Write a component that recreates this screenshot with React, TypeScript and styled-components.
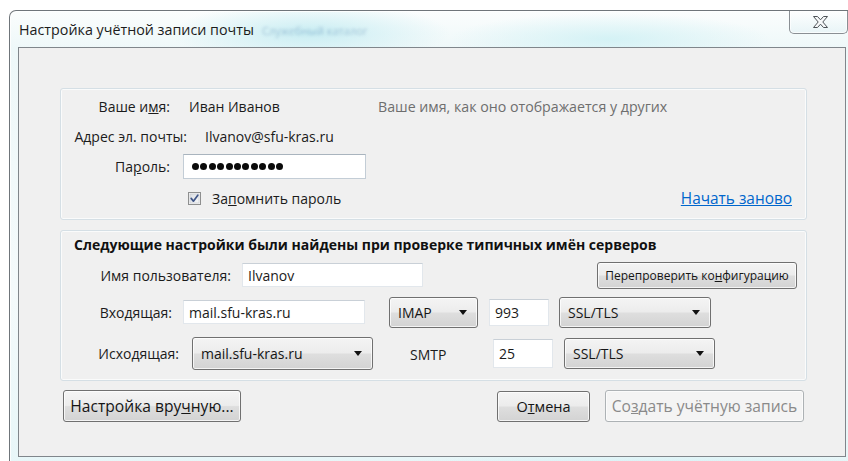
import React from "react";
import styled, { createGlobalStyle } from "styled-components";

const GlobalStyle = createGlobalStyle`
  html, body {
    margin: 0;
    padding: 0;
    background: #ffffff;
    overflow: hidden;
  }
  body {
    font-family: "Open Sans", "Noto Sans", "DejaVu Sans", sans-serif;
    color: #1b1b1b;
    -webkit-font-smoothing: antialiased;
  }
  #root {
    width: 848px;
    height: 461px;
    overflow: hidden;
  }
`;

const Screen = styled.div`
  width: 848px;
  height: 461px;
  box-sizing: border-box;
  overflow: hidden;
  background: #ffffff;
  padding: 10px 0 0 9px;
`;

const Window = styled.div`
  width: 849px;
  height: 470px;
  box-sizing: border-box;
  border: 1px solid #6f757a;
  border-bottom: none;
  border-radius: 7px 7px 0 0;
  padding: 0 11px 0 8px;
  display: flex;
  flex-direction: column;
  background:
    radial-gradient(ellipse 140px 30px at 300px 22px, rgba(196, 236, 242, 0.9), rgba(196, 236, 242, 0) 100%),
    radial-gradient(ellipse 160px 26px at 600px 28px, rgba(205, 240, 244, 0.8), rgba(205, 240, 244, 0) 100%),
    radial-gradient(ellipse 300px 20px at 640px 462px, rgba(200, 238, 244, 0.9), rgba(200, 238, 244, 0) 100%),
    linear-gradient(180deg, #fbfdfd 0%, #eef8f9 8%, #f4fafb 60%, #e6f6f8 100%);
  box-shadow: inset 1px 1px 0 rgba(255, 255, 255, 0.8);
`;

const TitleBar = styled.div`
  position: relative;
  height: 36px;
  flex-shrink: 0;
  display: flex;
  align-items: flex-start;
  margin-right: -2px;
`;

const Title = styled.span`
  position: relative;
  padding: 10px 0 0 1px;
  font-size: 14.3px;
  line-height: 18px;
  color: #1c1c1c;
  z-index: 1;
`;

/* text of the window lying behind the glass title bar */
const BehindGlass = styled.span`
  position: absolute;
  left: 244px;
  top: 12px;
  font-size: 11px;
  color: rgba(40, 90, 150, 0.3);
  filter: blur(1.4px);
  white-space: nowrap;
`;

const CloseButton = styled.div`
  margin-left: auto;
  width: 59px;
  height: 23px;
  box-sizing: border-box;
  border: 1px solid #8a8f94;
  border-top: none;
  border-radius: 0 0 5px 5px;
  background: linear-gradient(180deg, rgba(255, 255, 255, 0.7) 0%, rgba(240, 248, 250, 0.6) 50%, rgba(225, 240, 244, 0.6) 100%);
  box-shadow: inset 0 0 0 1px rgba(255, 255, 255, 0.7);
  display: flex;
  align-items: center;
  justify-content: center;
  padding-left: 4px;
`;

const Client = styled.div`
  height: 410px;
  flex-shrink: 0;
  box-sizing: border-box;
  border: 1px solid #80868b;
  background: #f0f0f0;
  padding: 40px 0 0 41px;
  display: flex;
  flex-direction: column;
`;

const GroupBox = styled.div<{ $h: number; $mt?: number }>`
  width: 747px;
  height: ${(p) => p.$h}px;
  margin-top: ${(p) => p.$mt ?? 0}px;
  box-sizing: border-box;
  border: 1px solid #d5dfe5;
  border-radius: 3px;
  box-shadow: inset 0 0 0 1px #fafbfb;
  padding: ${(p) => (p.$mt ? "0" : "2px")} 0 0 0;
  display: flex;
  flex-direction: column;
`;

const Row = styled.div<{ $h: number }>`
  height: ${(p) => p.$h}px;
  flex-shrink: 0;
  display: flex;
  align-items: center;
  font-size: 14px;
`;

const Label = styled.span<{ $w: number }>`
  width: ${(p) => p.$w}px;
  flex-shrink: 0;
  text-align: right;
  white-space: nowrap;
  color: #1b1b1b;
`;

const Value = styled.span<{ $ml: number; $w?: number }>`
  margin-left: ${(p) => p.$ml}px;
  width: ${(p) => (p.$w ? `${p.$w}px` : "auto")};
  flex-shrink: 0;
  white-space: nowrap;
  color: #1b1b1b;
`;

const Hint = styled.span`
  white-space: nowrap;
  color: #6e6e6e;
  font-size: 14.2px;
`;

const Heading = styled.div`
  height: 26px;
  flex-shrink: 0;
  display: flex;
  align-items: center;
  padding-left: 13px;
  font-size: 14px;
  font-weight: 700;
  color: #111111;
  white-space: nowrap;
`;

const Field = styled.div<{ $ml: number; $w: number; $h: number }>`
  margin-left: ${(p) => p.$ml}px;
  width: ${(p) => p.$w}px;
  height: ${(p) => p.$h}px;
  flex-shrink: 0;
  box-sizing: border-box;
  border: 1px solid #e2e7ec;
  border-top-color: #c9d0d7;
  background: #ffffff;
  display: flex;
  align-items: center;
  padding: 0 5px;
  font-size: 14px;
  color: #1b1b1b;
  white-space: nowrap;
`;

const PasswordField = styled(Field)`
  border: 1px solid #c3cdd6;
  border-top-color: #a9b4be;
  padding-left: 8px;
  gap: 1.4px;
`;

const Dot = styled.span`
  width: 7px;
  height: 7px;
  border-radius: 50%;
  background: #0a0a0a;
  flex-shrink: 0;
`;

const Check = styled.span<{ $ml: number }>`
  margin-left: ${(p) => p.$ml}px;
  width: 13px;
  height: 13px;
  flex-shrink: 0;
  display: flex;
`;

const LinkText = styled.a`
  margin-left: auto;
  margin-right: 14px;
  color: #0066cc;
  font-size: 15.4px;
  text-decoration: underline;
  white-space: nowrap;
  cursor: pointer;
`;

const buttonFace = `
  box-sizing: border-box;
  border: 1px solid #707070;
  border-radius: 3px;
  background: linear-gradient(180deg, #f4f4f4 0%, #ececec 48%, #dedede 52%, #d3d3d3 100%);
  box-shadow: inset 0 0 0 1px rgba(255, 255, 255, 0.75);
  color: #151515;
  white-space: nowrap;
`;

const Button = styled.div<{ $w: number; $h: number; $ml?: number | "auto"; $mr?: number; $fs?: number }>`
  ${buttonFace}
  width: ${(p) => p.$w}px;
  height: ${(p) => p.$h}px;
  margin-left: ${(p) => (p.$ml === undefined ? "0" : p.$ml === "auto" ? "auto" : `${p.$ml}px`)};
  margin-right: ${(p) => p.$mr ?? 0}px;
  flex-shrink: 0;
  display: flex;
  align-items: center;
  justify-content: center;
  font-size: ${(p) => p.$fs ?? 15}px;
`;

const DisabledButton = styled(Button)`
  border-color: #adb2b5;
  background: #f4f4f4;
  box-shadow: inset 0 0 0 1px #fbfbfb;
  color: #8a8a8a;
`;

const Select = styled.div<{ $ml: number; $w: number; $h: number }>`
  ${buttonFace}
  margin-left: ${(p) => p.$ml}px;
  width: ${(p) => p.$w}px;
  height: ${(p) => p.$h}px;
  flex-shrink: 0;
  display: flex;
  align-items: center;
  padding: 0 10px 0 8px;
  font-size: 14px;
`;

const Arrow = styled.span`
  margin-left: auto;
  width: 0;
  height: 0;
  border-left: 4.5px solid transparent;
  border-right: 4.5px solid transparent;
  border-top: 5px solid #111111;
`;

const Plain = styled.span<{ $ml: number; $w: number }>`
  margin-left: ${(p) => p.$ml}px;
  width: ${(p) => p.$w}px;
  flex-shrink: 0;
  font-size: 14px;
  color: #1b1b1b;
  padding-top: 3px;
`;

const ButtonBar = styled.div`
  margin-top: 9px;
  margin-left: 3px;
  width: 786px;
  display: flex;
  align-items: center;
`;

function CloseGlyph() {
  return (
    <svg width="15" height="12" viewBox="0 0 15 12">
      <polygon
        points="0.5,0.5 4.5,0.5 7.5,3.8 10.5,0.5 14.5,0.5 9.8,6 14.5,11.5 10.5,11.5 7.5,8.2 4.5,11.5 0.5,11.5 5.2,6"
        fill="#f7f9fa"
        stroke="#4d5257"
        strokeWidth="1"
        strokeLinejoin="round"
      />
    </svg>
  );
}

function CheckGlyph() {
  return (
    <svg width="13" height="13" viewBox="0 0 13 13">
      <defs>
        <linearGradient id="cbFill" x1="0" y1="0" x2="1" y2="1">
          <stop offset="0" stopColor="#dcdfe3" />
          <stop offset="1" stopColor="#f6f7f8" />
        </linearGradient>
      </defs>
      <rect x="0.5" y="0.5" width="12" height="12" fill="#f4f4f4" stroke="#8e8f8f" />
      <rect x="2" y="2" width="9" height="9" fill="url(#cbFill)" stroke="#c3c7cc" strokeWidth="0.6" />
      <path d="M3.2 6.4 L5.4 9.2 L9.8 3.2" fill="none" stroke="#3f5587" strokeWidth="1.7" strokeLinecap="round" strokeLinejoin="round" />
    </svg>
  );
}

const Dots = ({ count }: { count: number }) => (
  <>
    {Array.from({ length: count }, (_, i) => (
      <Dot key={i} />
    ))}
  </>
);

export default function App() {
  return (
    <>
      <GlobalStyle />
      <Screen>
        <Window>
          <TitleBar>
            <BehindGlass>Служебный каталог</BehindGlass>
            <Title>Настройка учётной записи почты</Title>
            <CloseButton>
              <CloseGlyph />
            </CloseButton>
          </TitleBar>
          <Client>
            <GroupBox $h={132}>
              <Row $h={30}>
                <Label $w={109}>
                  Ваше и<u>м</u>я:
                </Label>
                <Value $ml={19} $w={189}>
                  Иван Иванов
                </Value>
                <Hint>Ваше имя, как оно отображается у других</Hint>
              </Row>
              <Row $h={30}>
                <Label $w={126}>
                  А<u>д</u>рес эл. почты:
                </Label>
                <Value $ml={18}>Ilvanov@sfu-kras.ru</Value>
              </Row>
              <Row $h={31}>
                <Label $w={109}>
                  Па<u>р</u>оль:
                </Label>
                <PasswordField $ml={13} $w={183} $h={25}>
                  <Dots count={11} />
                </PasswordField>
              </Row>
              <Row $h={32}>
                <Check $ml={127}>
                  <CheckGlyph />
                </Check>
                <Value $ml={11}>
                  За<u>п</u>омнить пароль
                </Value>
                <LinkText>Начать заново</LinkText>
              </Row>
            </GroupBox>

            <GroupBox $h={151} $mt={10}>
              <Heading>Следующие настройки были найдены при проверке типичных имён серверов</Heading>
              <Row $h={36}>
                <Label $w={170}>Имя пользователя:</Label>
                <Field $ml={11} $w={181} $h={24}>
                  Ilvanov
                </Field>
                <Button $w={200} $h={27} $ml="auto" $mr={9} $fs={12}>
                  Перепроверить ко<u>н</u>фигурацию
                </Button>
              </Row>
              <Row $h={38}>
                <Label $w={111}>Входящая:</Label>
                <Field $ml={11} $w={182} $h={24}>
                  mail.sfu-kras.ru
                </Field>
                <Select $ml={24} $w={89} $h={31}>
                  IMAP
                  <Arrow />
                </Select>
                <Field $ml={11} $w={60} $h={27}>
                  993
                </Field>
                <Select $ml={10} $w={152} $h={31}>
                  SSL/TLS
                  <Arrow />
                </Select>
              </Row>
              <Row $h={44}>
                <Label $w={118}>Исходящая:</Label>
                <Select $ml={13} $w={181} $h={33}>
                  mail.sfu-kras.ru
                  <Arrow />
                </Select>
                <Plain $ml={37} $w={83}>
                  SMTP
                </Plain>
                <Field $ml={0} $w={60} $h={29}>
                  25
                </Field>
                <Select $ml={11} $w={151} $h={31}>
                  SSL/TLS
                  <Arrow />
                </Select>
              </Row>
            </GroupBox>

            <ButtonBar>
              <Button $w={178} $h={32} $fs={15.6}>
                Настройка вру<u>ч</u>ную...
              </Button>
              <Button $w={93} $h={31} $ml={256} $fs={14.5}>
                О<u>т</u>мена
              </Button>
              <DisabledButton $w={199} $h={32} $ml={15} $fs={15.6}>
                Со<u>з</u>дать учётную запись
              </DisabledButton>
            </ButtonBar>
          </Client>
        </Window>
      </Screen>
    </>
  );
}
